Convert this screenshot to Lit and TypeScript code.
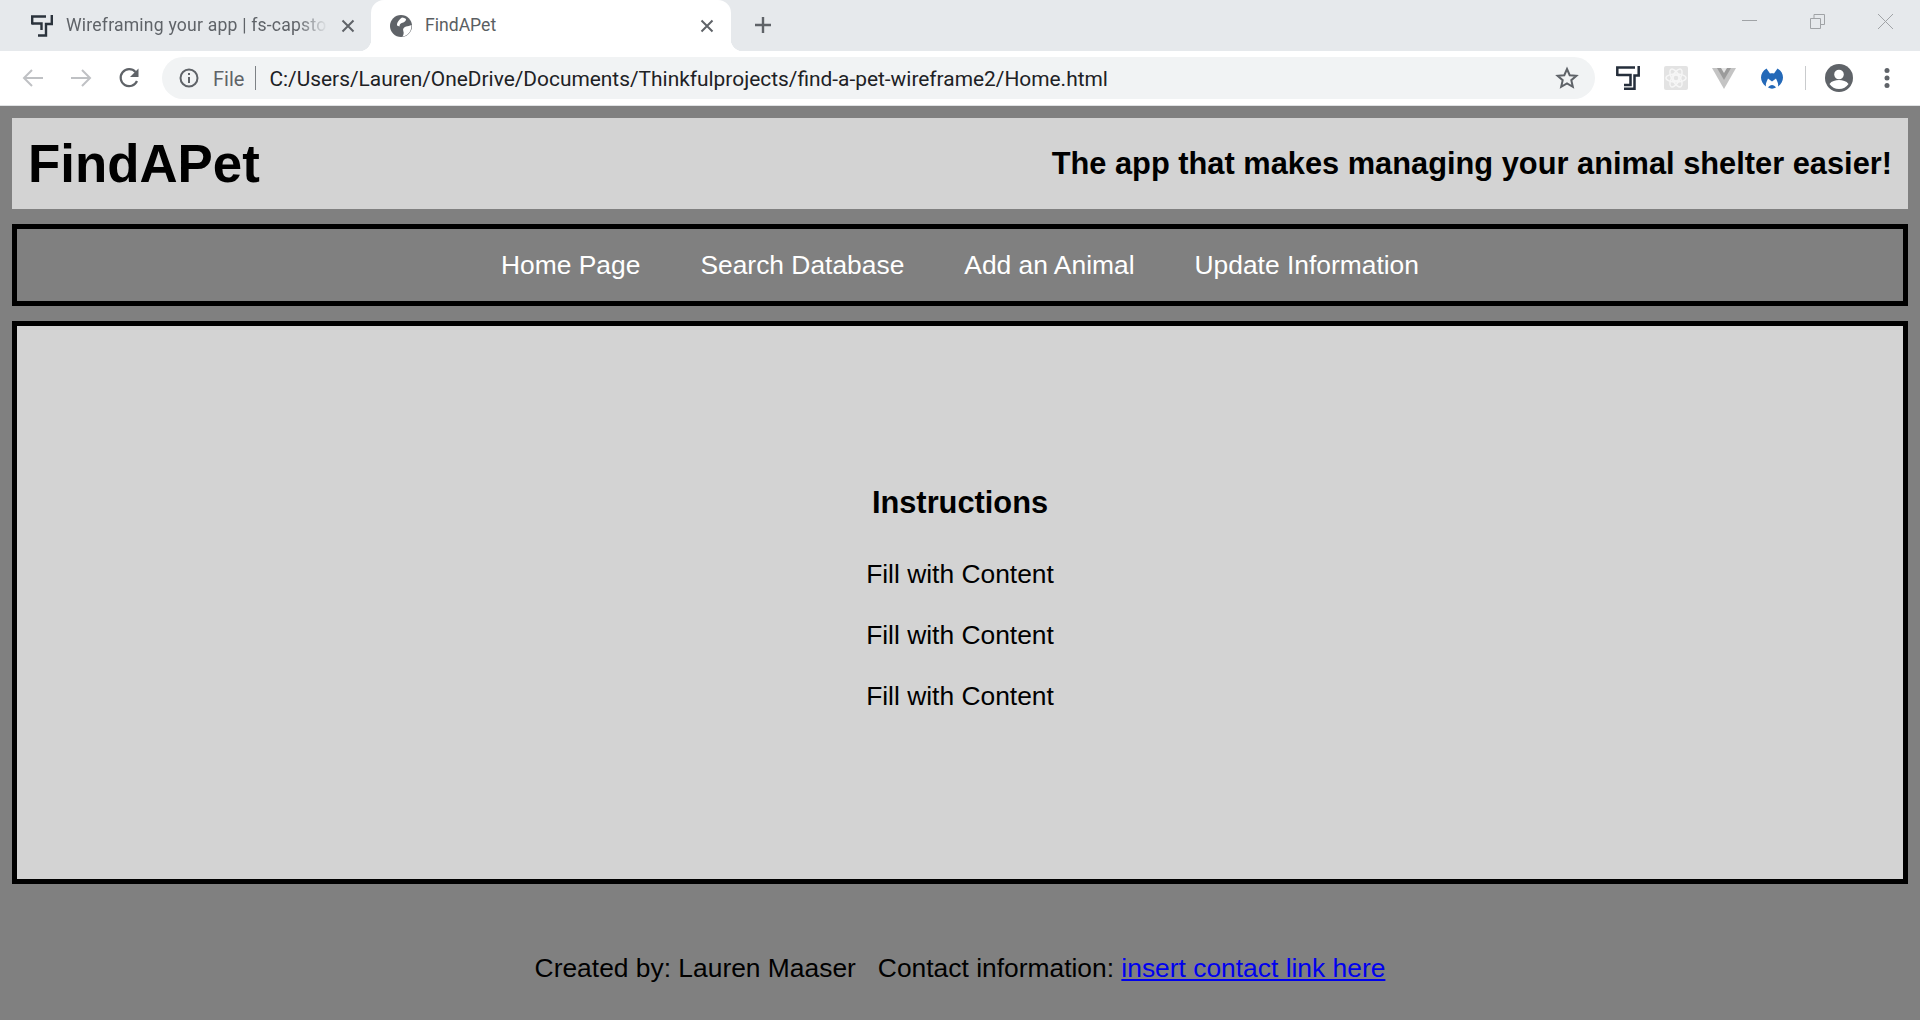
import { LitElement, html, css } from "lit";
import { customElement } from "lit/decorators.js";

const tLogo = (size: number, color: string) => html`<svg width=${size} height=${size} viewBox="0 0 24 24" fill="none" stroke=${color} stroke-width="2.500"><path d="M1.300 10V1.500H19"/><path d="M1.300 9H14.500V19H8"/><path d="M22.700 0V9.500H18.500V22.700H8"/></svg>`;
const tabLogo = html`<svg width="22" height="22" viewBox="0 0 22 22" fill="none" stroke="#2b333c" stroke-width="2.400"><path d="M1.200 9.500V1.500H15"/><path d="M1.200 8.500H10.500V15"/><path d="M20.800 0V9H15V20.500H7"/></svg>`;

@customElement("app-root")
export class AppRoot extends LitElement {
  static styles = css`
    :host { display: block; width: 1920px; height: 1020px; overflow: hidden; background: #808080; font-family: "Liberation Sans", Arial, sans-serif; }
    .tabstrip { display: flex; height: 51px; background: #e6e9ec; font-family: Roboto, sans-serif; font-size: 17.6px; }
    .tab { position: relative; display: flex; align-items: center; box-sizing: border-box; height: 51px; }
    .tab1 { width: 371px; padding: 0 15px 0 31px; color: #5f6368; }
    .tab2 { width: 360px; padding: 0 16px 0 19px; background: #fff; border-radius: 13px 13px 0 0; color: #5a5e62; }
    .tab2::before, .tab2::after { content: ""; position: absolute; bottom: 0; width: 12px; height: 12px; }
    .tab2::before { left: -12px; background: radial-gradient(circle at 0 0, transparent 12px, #fff 12.5px); }
    .tab2::after { right: -12px; background: radial-gradient(circle at 100% 0, transparent 12px, #fff 12.5px); }
    .favicon { flex: none; width: 22px; height: 22px; margin-right: 13px; }
    .title { flex: 1; min-width: 0; white-space: nowrap; padding-bottom: 2px; }
    .tab1 .title { letter-spacing: 0.2px; -webkit-mask-image: linear-gradient(90deg, #000 88%, transparent 100%); mask-image: linear-gradient(90deg, #000 88%, transparent 100%); margin-right: 12px; }
    .close { flex: none; width: 16px; height: 16px; }
    .newtab { flex: none; width: 24px; height: 24px; margin: 13px 0 0 20px; }
    .winctl { display: flex; align-items: flex-start; margin-left: auto; padding: 14px 27px 0 0; gap: 53px; }
    .winctl svg { width: 15px; height: 15px; }
    .toolbar { display: flex; align-items: center; height: 54px; background: #fff; border-bottom: 1px solid #e0e2e4; }
    .nav-ic { flex: none; width: 24px; height: 24px; margin-left: 21px; margin-right: 3px; }
    .omni { flex: none; display: flex; align-items: center; width: 1433px; height: 42px; margin-left: 18px; border-radius: 21px; background: #f1f3f4; font-family: Roboto, sans-serif; font-size: 20.9px; color: #202124; box-sizing: border-box; padding: 0 16px 0 17px; }
    .omni .info { width: 20px; height: 20px; flex: none; margin-right: 14px; }
    .omni .file { color: #5f6368; font-size: 20px; padding-top: 1px; }
    .omni .sep { width: 1px; height: 24px; background: #7d8185; margin: 0 13px 0 11px; }
    .omni .url { flex: 1; white-space: nowrap; padding-top: 1px; }
    .omni .star { width: 24px; height: 24px; flex: none; }
    .exts { display: flex; align-items: center; flex: none; margin-left: 21px; }
    .ext { flex: none; width: 24px; height: 24px; margin-right: 24px; }
    .tsep { width: 1px; height: 24px; background: #c9cbcd; margin: 0 19px 0 -3px; flex: none; }
    .avatar { flex: none; width: 28px; height: 28px; margin-right: 31px; }
    .dots { flex: none; width: 6px; height: 22px; }

    .page { box-sizing: border-box; height: 914px; padding: 12px 12px 0; display: flex; flex-direction: column; gap: 15px; background: #808080; }
    header { flex: none; display: flex; align-items: center; justify-content: space-between; height: 91px; padding: 0 16px; background: #d3d3d3; color: #000; }
    h1 { margin: 0; font-size: 52.8px; font-weight: 700; }
    .tag { font-size: 30.8px; font-weight: 700; }
    nav { flex: none; display: flex; justify-content: center; align-items: center; gap: 60px; box-sizing: border-box; height: 82px; border: 5px solid #000; background: #808080; color: #fff; font-size: 26.4px; }
    main { flex: none; display: flex; flex-direction: column; align-items: center; justify-content: center; box-sizing: border-box; height: 563px; border: 5px solid #000; background: #d3d3d3; color: #000; }
    h2 { margin: 1px 0 37.5px; font-size: 30.8px; font-weight: 700; line-height: 37px; }
    main p { margin: 0 0 30px; font-size: 26.4px; line-height: 31px; }
    main p:last-child { margin-bottom: 10px; }
    footer { flex: none; margin-top: 54px; text-align: center; font-size: 26.4px; line-height: 31px; color: #000; white-space: pre; }
    footer a { color: #0000ee; text-decoration: underline; }
  `;

  render() {
    return html`
      <div class="tabstrip">
        <div class="tab tab1">
          <div class="favicon">${tabLogo}</div>
          <span class="title">Wireframing your app | fs-capsto</span>
          <svg class="close" viewBox="0 0 16 16" stroke="#5f6368" stroke-width="2"><path d="M2.500 2.500l11 11M13.500 2.500l-11 11"/></svg>
        </div>
        <div class="tab tab2">
          <svg class="favicon" viewBox="0 0 22 22"><circle cx="11" cy="11" r="11" fill="#5f6368"/><path fill="#fff" d="M12 2.500c1.500.2 3 .6 4 1.500.3 1.800-1.500 3.200-3.500 3.800-2 .6-3 1.700-3 3.700L7 10.500C6.800 7 9.500 4.500 12 2.500z"/><path fill="#fff" d="M21.500 10c0 4-1 7-4 9.500-1.800 1.300-3.500 1.800-5 1.900 1-1.500 1.600-3.400.8-5.400-.8-2 .5-4 2.700-4.500 2-.4 3.500-.5 5.500-1.500z"/></svg>
          <span class="title">FindAPet</span>
          <svg class="close" viewBox="0 0 16 16" stroke="#5f6368" stroke-width="2"><path d="M2.500 2.500l11 11M13.500 2.500l-11 11"/></svg>
        </div>
        <svg class="newtab" viewBox="0 0 24 24" stroke="#5f6368" stroke-width="2.400"><path d="M12 4v16M4 12h16"/></svg>
        <div class="winctl">
          <svg viewBox="0 0 15 15" fill="none" stroke="#a0a3a6"><path d="M0 6.500h15"/></svg>
          <svg viewBox="0 0 15 15" fill="none" stroke="#a0a3a6"><path d="M.5 4.500h10v10H.5zM4 4.500V.5h10.500v10H11"/></svg>
          <svg viewBox="0 0 15 15" fill="none" stroke="#a0a3a6"><path d="M0 0l15 15M15 0L0 15"/></svg>
        </div>
      </div>
      <div class="toolbar">
        <svg class="nav-ic" viewBox="0 0 24 24" fill="none" stroke="#bfc1c4" stroke-width="2"><path d="M22 12H3M11 4l-8 8 8 8"/></svg>
        <svg class="nav-ic" viewBox="0 0 24 24" fill="none" stroke="#bfc1c4" stroke-width="2"><path d="M2 12h19M13 4l8 8-8 8"/></svg>
        <svg class="nav-ic" viewBox="0 0 24 24" fill="none"><path d="M20 15a8.500 8.500 0 1 1-1.500-9" stroke="#5f6368" stroke-width="2.200"/><path d="M21.500 2.500v8.500H13z" fill="#5f6368"/></svg>
        <div class="omni">
          <svg class="info" viewBox="0 0 20 20" fill="none" stroke="#5f6368" stroke-width="2"><circle cx="10" cy="10" r="8.500"/><path d="M10 9v6M10 5v2"/></svg>
          <span class="file">File</span><span class="sep"></span>
          <span class="url">C:/Users/Lauren/OneDrive/Documents/Thinkfulprojects/find-a-pet-wireframe2/Home.html</span>
          <svg class="star" viewBox="0 0 24 24" fill="none" stroke="#5f6368" stroke-width="2"><path d="M12 3l2.700 6.200 6.700.6-5.100 4.400 1.500 6.600L12 17.300l-5.800 3.500 1.500-6.600-5.100-4.400 6.700-.6z"/></svg>
        </div>
        <div class="exts">
          <div class="ext">${tLogo(24, "#252e3b")}</div>
          <svg class="ext" viewBox="0 0 24 24"><rect width="24" height="24" rx="2" fill="#e3e3e3"/><g fill="none" stroke="#f6f6f6" stroke-width="1.500"><circle cx="12" cy="12" r="3"/><ellipse cx="12" cy="12" rx="10" ry="4"/><ellipse cx="12" cy="12" rx="10" ry="4" transform="rotate(60 12 12)"/><ellipse cx="12" cy="12" rx="10" ry="4" transform="rotate(120 12 12)"/></g></svg>
          <svg class="ext" viewBox="0 0 24 24"><path d="M0 2h24L12 23z" fill="#c4c4c4"/><path d="M5 2h14l-7 12z" fill="#9b9b9b"/><path d="M9 2h6l-3 5z" fill="#e6e6e6"/></svg>
          <svg class="ext" viewBox="0 0 24 24"><path fill="#2469b8" d="M6.500 2.500 10 7.500c1.300-.4 2.700-.4 4 0l3.500-5C21 4.500 23 8 23 11.500c0 3.500-2 7-5 9 .3-1.500.2-3-.5-4.500l-1.500-3.500-4 3-4-3L6.500 16c-.7 1.500-.8 3-.5 4.500-3-2-5-5.500-5-9C1 8 3 4.500 6.500 2.500z"/><path fill="#2469b8" d="M8 21.500c2.500 1.500 5.500 1.500 8 0-1-1.500-2.500-2.500-4-2.500s-3 1-4 2.500z"/></svg>
          <span class="tsep"></span>
          <svg class="avatar" viewBox="0 0 28 28"><circle cx="14" cy="14" r="14" fill="#5f6368"/><circle cx="14" cy="10.500" r="4.800" fill="#fff"/><path d="M4.500 20c2-3 6-4 9.500-4s7.500 1 9.500 4c-2 3-5.500 5-9.500 5s-7.500-2-9.500-5z" fill="#fff"/></svg>
          <svg class="dots" viewBox="0 0 6 22" fill="#5f6368"><circle cx="3" cy="3.500" r="2.500"/><circle cx="3" cy="11" r="2.500"/><circle cx="3" cy="18.500" r="2.500"/></svg>
        </div>
      </div>
      <div class="page">
        <header><h1>FindAPet</h1><span class="tag">The app that makes managing your animal shelter easier!</span></header>
        <nav><span>Home Page</span><span>Search Database</span><span>Add an Animal</span><span>Update Information</span></nav>
        <main>
          <h2>Instructions</h2>
          <p>Fill with Content</p><p>Fill with Content</p><p>Fill with Content</p>
        </main>
        <footer>Created by: Lauren Maaser   Contact information: <a href="#">insert contact link here</a></footer>
      </div>
    `;
  }
}
